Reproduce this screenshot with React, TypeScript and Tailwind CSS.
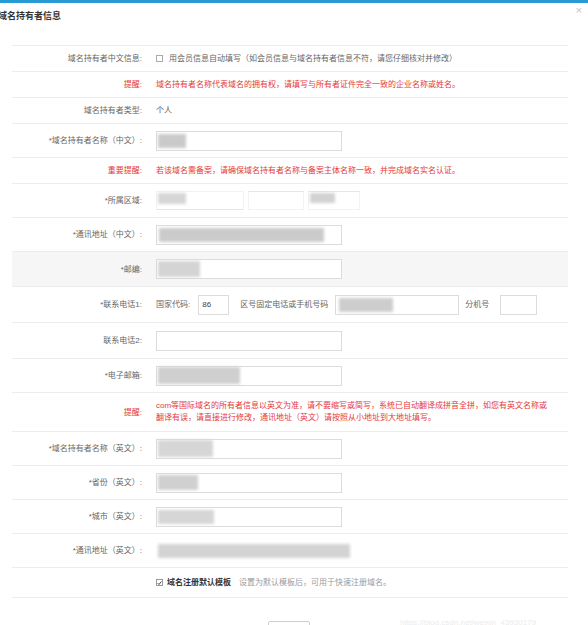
import React from "react";

const FONT = "font-['Liberation_Sans','Noto_Sans_CJK_SC',sans-serif]";

function Row({
  label,
  h,
  red,
  grey,
  children,
}: {
  label: string;
  h: string;
  red?: boolean;
  grey?: boolean;
  children?: React.ReactNode;
}) {
  return (
    <div
      className={`flex items-center border-b border-[#ececec] ${h} ${grey ? "bg-[#f6f6f6]" : ""}`}
    >
      <div
        className={`w-[130px] shrink-0 text-right text-[8px] leading-[11px] ${
          red ? "text-[#e4393c]" : "text-[#666]"
        }`}
      >
        {label}
      </div>
      <div className="ml-[14px] flex items-center">{children}</div>
    </div>
  );
}

function Input({
  w = "w-[186px]",
  blob,
}: {
  w?: string;
  blob?: React.ReactNode;
}) {
  return (
    <div className={`${w} h-[20px] border border-[#dcdcdc] bg-white flex items-center overflow-visible`}>
      {blob}
    </div>
  );
}

function Blob({ cls }: { cls: string }) {
  return <div className={`${cls} blur-[1.5px] shrink-0`} />;
}

export default function App() {
  return (
    <div className={`w-[588px] h-[625px] overflow-hidden bg-white ${FONT}`}>
      <div className="h-[3px] bg-[#2a9ad5]" />
      <div className="h-[42px] flex justify-between">
        <div className="ml-[-2px] mt-[7px] text-[9px] leading-[12px] font-bold text-[#333]">
          域名持有者信息
        </div>
        <div className="mr-[6px] mt-[1px] text-[11px] leading-[12px] text-[#c4c4c4]">×</div>
      </div>

      <div className="ml-[12px] w-[556px] border-t border-[#ececec]">
        <Row label="域名持有者中文信息:" h="h-[26px]">
          <div className="w-[7px] h-[7px] border border-[#aaa] bg-white" />
          <span className="ml-[6px] text-[8px] text-[#666]">
            用会员信息自动填写（如会员信息与域名持有者信息不符，请您仔细核对并修改）
          </span>
        </Row>
        <Row label="提醒:" h="h-[26px]" red>
          <span className="text-[8px] text-[#e4393c]">
            域名持有者名称代表域名的拥有权，请填写与所有者证件完全一致的企业名称或姓名。
          </span>
        </Row>
        <Row label="域名持有者类型:" h="h-[26px]">
          <span className="text-[8px] text-[#555]">个人</span>
        </Row>
        <Row label="*域名持有者名称（中文）:" h="h-[34px]">
          <Input blob={<Blob cls="ml-[1px] w-[28px] h-[14px] bg-[#cacaca]" />} />
        </Row>
        <Row label="重要提醒:" h="h-[26px]" red>
          <span className="text-[8px] text-[#e4393c]">
            若该域名需备案，请确保域名持有者名称与备案主体名称一致，并完成域名实名认证。
          </span>
        </Row>
        <Row label="*所属区域:" h="h-[34px]">
          <div className="flex gap-[4px] items-start">
            <div className="w-[88px] h-[19px] border border-[#f3f3f3] border-b-[#e6e6e6] flex items-start pt-[1px] pl-[1px]">
              <Blob cls="w-[28px] h-[11px] bg-[#d6d6d6]" />
            </div>
            <div className="w-[56px] h-[19px] border border-[#f3f3f3] border-t-[#e6e6e6]" />
            <div className="w-[52px] h-[19px] border border-[#f3f3f3] border-t-[#e6e6e6] flex items-start pt-[1px] pl-[1px]">
              <Blob cls="w-[25px] h-[10px] bg-[#d2d2d2]" />
            </div>
          </div>
        </Row>
        <Row label="*通讯地址（中文）:" h="h-[34px]">
          <Input blob={<Blob cls="ml-[2px] w-[165px] h-[14px] bg-[#cbcbcb]" />} />
        </Row>
        <Row label="*邮编:" h="h-[35px]" grey>
          <Input blob={<Blob cls="ml-[1px] w-[42px] h-[16px] bg-[#d4d4d4]" />} />
        </Row>
        <Row label="*联系电话1:" h="h-[36px]">
          <span className="text-[8px] text-[#666]">国家代码:</span>
          <div className="ml-[8px] w-[31px] h-[20px] border border-[#dcdcdc] flex items-center pl-[3px] text-[8px] text-[#444]">
            86
          </div>
          <span className="ml-[11px] text-[8px] text-[#666]">区号固定电话或手机号码</span>
          <Input
            w="ml-[7px] w-[124px]"
            blob={<Blob cls="ml-[3px] w-[54px] h-[14px] bg-[#cdcdcd]" />}
          />
          <span className="ml-[6px] text-[8px] text-[#666]">分机号</span>
          <div className="ml-[11px] w-[37px] h-[20px] border border-[#dcdcdc]" />
        </Row>
        <Row label="联系电话2:" h="h-[36px]">
          <Input />
        </Row>
        <Row label="*电子邮箱:" h="h-[34px]">
          <Input blob={<Blob cls="ml-[1px] w-[82px] h-[17px] bg-[#cfcfcf]" />} />
        </Row>
        <Row label="提醒:" h="h-[39px]" red>
          <div className="w-[410px] text-[8px] leading-[12px] text-[#e4393c] whitespace-nowrap">
            com等国际域名的所有者信息以英文为准，请不要缩写或简写，系统已自动翻译成拼音全拼，如您有英文名称或
            <br />
            翻译有误，请直接进行修改，通讯地址（英文）请按照从小地址到大地址填写。
          </div>
        </Row>
        <Row label="*域名持有者名称（英文）:" h="h-[34px]">
          <Input blob={<Blob cls="ml-[1px] w-[55px] h-[17px] bg-[#d6d6d6]" />} />
        </Row>
        <Row label="*省份（英文）:" h="h-[34px]">
          <Input blob={<Blob cls="ml-[1px] w-[40px] h-[15px] bg-[#d0d0d0]" />} />
        </Row>
        <Row label="*城市（英文）:" h="h-[34px]">
          <Input blob={<Blob cls="ml-[1px] w-[56px] h-[14px] bg-[#d6d6d6]" />} />
        </Row>
        <Row label="*通讯地址（英文）:" h="h-[34px]">
          <Blob cls="ml-[2px] w-[192px] h-[14px] bg-[#d3d3d3]" />
        </Row>
        <Row label="" h="h-[30px]">
          <div className="w-[7px] h-[7px] border border-[#999] bg-white flex items-center justify-center">
            <svg width="6" height="6" viewBox="0 0 6 6">
              <path d="M0.8 3.2 L2.4 4.8 L5.2 1.2" fill="none" stroke="#333" strokeWidth="1.1" />
            </svg>
          </div>
          <span className="ml-[4px] text-[8px] font-bold text-[#333]">域名注册默认模板</span>
          <span className="ml-[8px] text-[8px] text-[#9a9a9a]">设置为默认模板后，可用于快速注册域名。</span>
        </Row>
      </div>

      <div className="flex mt-[23px] items-start">
        <div className="ml-[268px] w-[42px] h-[22px] border border-[#cfcfcf] rounded-[2px] text-[8px] text-[#333] flex items-center justify-center">
          确定
        </div>
        <div className="ml-[90px] mt-[-4px] text-[8px] text-[#ececec] whitespace-nowrap">
          https://blog.csdn.net/weixin_43930179
        </div>
      </div>
    </div>
  );
}
